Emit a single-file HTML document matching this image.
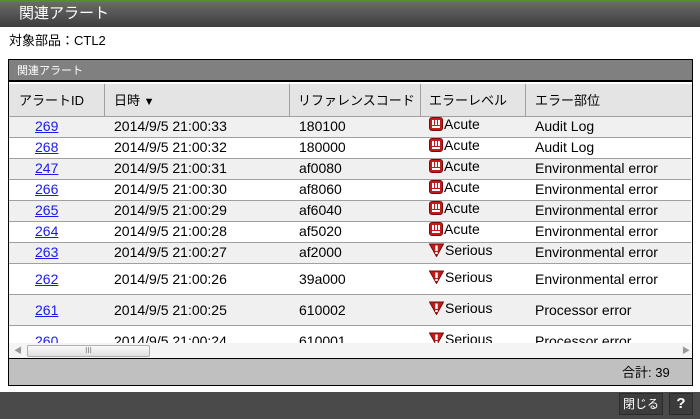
<!DOCTYPE html>
<html><head><meta charset="utf-8"><style>
*{margin:0;padding:0;box-sizing:border-box}
body{width:700px;height:419px;position:relative;background:#fff;font-family:"Liberation Sans","Noto Sans CJK JP",sans-serif;font-size:13px;color:#000;overflow:hidden}
.a{position:absolute}
.title{left:0;top:0;width:700px;height:27px;background:linear-gradient(#6a6a6a,#3e3e3e);border-top:2px solid #5a8a2a}
.title span{position:absolute;left:19px;top:2px;color:#fff;font-size:15px;line-height:20px}
.row{position:absolute;left:9px;width:682px;border-bottom:1px solid #a0a0a0;font-size:14px}
.t{position:absolute;white-space:nowrap}
a{color:#1a1aee;text-decoration:underline}
.ic{display:inline-block;vertical-align:-2px;margin-right:1px}
</style></head><body>
<div class="a title"><span>関連アラート</span></div>
<div class="a" style="left:9px;top:30px;font-size:13px">対象部品：CTL2</div>
<div class="a" style="left:8px;top:59px;width:685px;height:327px;border:1px solid #000;background:#fff"></div>
<div class="a" style="left:9px;top:60px;width:683px;height:22px;background:#808080;border-bottom:2px solid #000;color:#fff;font-size:11px;padding:2px 0 0 8px">関連アラート</div>
<div class="a" style="left:9px;top:84px;width:683px;height:33px;background:#e4e4e4;border-bottom:1px solid #a0a0a0"></div>
<div class="a" style="left:104px;top:84px;width:1px;height:259px;background:#a0a0a0"></div>
<div class="a" style="left:289px;top:84px;width:1px;height:259px;background:#a0a0a0"></div>
<div class="a" style="left:420px;top:84px;width:1px;height:259px;background:#a0a0a0"></div>
<div class="a" style="left:525px;top:84px;width:1px;height:259px;background:#a0a0a0"></div>
<div class="a" style="left:19px;top:90px">アラートID</div>
<div class="a" style="left:114px;top:90px">日時 <span style="font-size:11px">▼</span></div>
<div class="a" style="left:298px;top:90px">リファレンスコード</div>
<div class="a" style="left:429px;top:90px">エラーレベル</div>
<div class="a" style="left:535px;top:90px">エラー部位</div>
<div id="rows"></div>
<script>
var d=[["269","2014/9/5 21:00:33","180100","A","Audit Log"],["268","2014/9/5 21:00:32","180000","A","Audit Log"],["247","2014/9/5 21:00:31","af0080","A","Environmental error"],["266","2014/9/5 21:00:30","af8060","A","Environmental error"],["265","2014/9/5 21:00:29","af6040","A","Environmental error"],["264","2014/9/5 21:00:28","af5020","A","Environmental error"],["263","2014/9/5 21:00:27","af2000","S","Environmental error"],["262","2014/9/5 21:00:26","39a000","S","Environmental error"],["261","2014/9/5 21:00:25","610002","S","Processor error"],["260","2014/9/5 21:00:24","610001","S","Processor error"]];
var acute='<svg class="ic" width="14" height="14"><rect x="0.5" y="0.5" width="13" height="13" rx="2.5" fill="#c41a1a" stroke="#7a0a0a"/><rect x="3" y="3" width="2" height="5" fill="#fff"/><rect x="6" y="3" width="2" height="5" fill="#fff"/><rect x="9" y="3" width="2" height="5" fill="#fff"/><rect x="3" y="9" width="8" height="2" fill="#fff"/></svg>';
var ser='<svg class="ic" width="15" height="14"><path d="M0.5 1 L14.5 1 L7.5 13.5 Z" fill="#c41a1a" stroke="#7a0a0a"/><rect x="6.3" y="2.5" width="2.4" height="5.5" fill="#fff"/><rect x="6.3" y="9" width="2.4" height="2" fill="#fff"/></svg>';
var h='',y=117;
for(var i=0;i<d.length;i++){var r=d[i];var hh=i<7?21:31;var bg=i%2==0?'#f0f0f0':'#fff';var ty=i<7?1:7;
h+='<div class="row" style="top:'+y+'px;height:'+hh+'px;background:'+bg+'">'+
'<div class="t" style="left:26px;top:'+ty+'px"><a>'+r[0]+'</a></div>'+
'<div class="t" style="left:105px;top:'+ty+'px">'+r[1]+'</div>'+
'<div class="t" style="left:290px;top:'+ty+'px">'+r[2]+'</div>'+
'<div class="t" style="left:420px;top:'+(ty-2)+'px">'+(r[3]=="A"?acute+'Acute':ser+'Serious')+'</div>'+
'<div class="t" style="left:526px;top:'+ty+'px">'+r[4]+'</div></div>';
y+=hh;}
document.getElementById('rows').innerHTML=h;
</script>
<div class="a" style="left:9px;top:343px;width:683px;height:15px;background:#f4f4f4"></div>
<div class="a" style="left:27px;top:345px;width:123px;height:12px;background:linear-gradient(#fafafa,#e0e0e0);border:1px solid #b0b0b0;border-radius:2px;font-size:8px;color:#777;text-align:center;line-height:10px">III</div>
<div class="a" style="left:14px;top:345px;font-size:8px;color:#999">◀</div>
<div class="a" style="left:682px;top:345px;font-size:8px;color:#999">▶</div>
<div class="a" style="left:9px;top:358px;width:683px;height:27px;background:#c0c0c0;border-top:1px solid #000"></div>
<div class="a" style="left:622px;top:362px">合計: 39</div>
<div class="a" style="left:0;top:392px;width:700px;height:27px;background:#4a4a4a"></div>
<div class="a" style="left:619px;top:393px;width:44px;height:22px;background:#3c3c3c;border:1px solid #2a2a2a;color:#fff;font-size:12px;text-align:center;line-height:20px">閉じる</div>
<div class="a" style="left:669px;top:393px;width:24px;height:22px;background:#3c3c3c;border:1px solid #2a2a2a;color:#fff;font-size:15px;font-weight:bold;text-align:center;line-height:20px">?</div>
</body></html>
